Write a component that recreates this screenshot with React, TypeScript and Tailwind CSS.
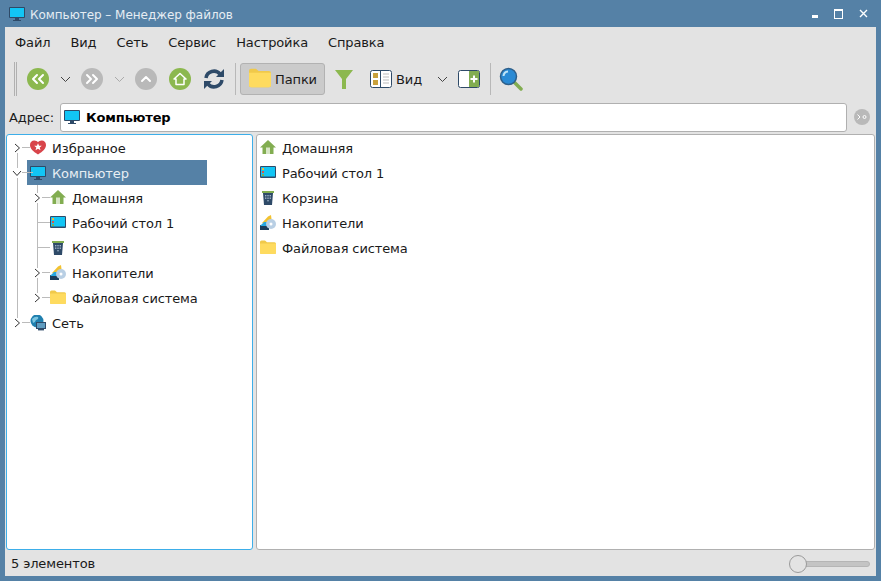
import { ReactNode } from "react";

const font = { fontFamily: '"DejaVu Sans", sans-serif' };

function Computer({ size = 16 }: { size?: number }) {
  return (
    <svg width={size} height={size} viewBox="0 0 16 16">
      <rect x="0" y="1" width="16" height="11" rx="1" fill="#2e4a68" />
      <rect x="1" y="2" width="14" height="9" fill="#12c5f5" />
      <rect x="6" y="12" width="4" height="2" fill="#2e4a68" />
      <rect x="4" y="14" width="8" height="1" fill="#2e4a68" />
    </svg>
  );
}

function Home() {
  return (
    <svg width="16" height="16" viewBox="0 0 16 16">
      <path d="M8 0 L16 7.5 L13.5 7.5 L13.5 14 L2.5 14 L2.5 7.5 L0 7.5 Z" fill="#82ad51" />
      <rect x="6" y="7.5" width="4" height="6.5" fill="#d8e6c6" />
    </svg>
  );
}

function Desktop() {
  return (
    <svg width="16" height="16" viewBox="0 0 16 16">
      <rect x="0" y="1" width="16" height="12" rx="1" fill="#2e4a68" />
      <rect x="1" y="2" width="14" height="9.5" fill="#12c5f5" />
      <rect x="2" y="3" width="2" height="2" fill="#e8b93c" />
      <rect x="2" y="6" width="2" height="2" fill="#d9534f" />
      <rect x="2" y="9" width="2" height="2" fill="#82ad51" />
    </svg>
  );
}

function Trash() {
  return (
    <svg width="16" height="16" viewBox="0 0 16 16">
      <rect x="2" y="1" width="12" height="2" fill="#82ad51" />
      <path d="M3 3 H13 L12 15 H4 Z" fill="#2e4a68" />
      <g fill="#9fb2c6">
        <rect x="5" y="5" width="1.4" height="1.4" />
        <rect x="7.3" y="5" width="1.4" height="1.4" />
        <rect x="9.6" y="5" width="1.4" height="1.4" />
        <rect x="5" y="7.5" width="1.4" height="1.4" />
        <rect x="7.3" y="7.5" width="1.4" height="1.4" />
        <rect x="9.6" y="7.5" width="1.4" height="1.4" />
        <rect x="7.3" y="10" width="1.4" height="1.4" />
      </g>
    </svg>
  );
}

function Drives() {
  return (
    <svg width="16" height="16" viewBox="0 0 16 16">
      <path d="M2 8 L8 1.5 L11 0 L12 8 Z" fill="#f2c230" />
      <path d="M0 10 H9 V15 H0 Z" fill="#1d3c5a" />
      <path d="M0 11 L4 7 H8 V11 Z" fill="#2aa7e0" />
      <circle cx="11" cy="9" r="5" fill="#b9cfe4" />
      <circle cx="11" cy="9" r="1.5" fill="#ffffff" />
    </svg>
  );
}

function Folder({ size = 16 }: { size?: number }) {
  return (
    <svg width={size} height={size} viewBox="0 0 16 16">
      <path d="M0 2 Q0 0.5 1.5 0.5 H5 L7 2.2 H14.5 Q16 2.2 16 3.7 V12.5 Q16 14 14.5 14 H1.5 Q0 14 0 12.5 Z" fill="#f0c94a" />
      <path d="M0 3.5 H16 V12.5 Q16 14 14.5 14 H1.5 Q0 14 0 12.5 Z" fill="#fedb5f" />
    </svg>
  );
}

function Heart() {
  return (
    <svg width="16" height="16" viewBox="0 0 16 16">
      <path d="M8 14.5 C3 11.5 0 8.5 0 5 C0 2 2 0.5 4.2 0.5 C6 0.5 7.2 1.3 8 2.3 C8.8 1.3 10 0.5 11.8 0.5 C14 0.5 16 2 16 5 C16 8.5 13 11.5 8 14.5 Z" fill="#d8444a" />
      <path d="M8 3.3 L9.1 5.8 L11.8 5.8 L9.7 7.6 L10.5 10.3 L8 8.7 L5.5 10.3 L6.3 7.6 L4.2 5.8 L6.9 5.8 Z" fill="#ffffff" />
    </svg>
  );
}

function Network() {
  return (
    <svg width="16" height="16" viewBox="0 0 16 16">
      <circle cx="7" cy="6" r="6.5" fill="#1f7fae" />
      <path d="M2 4 Q5 1 8 2 Q9 4 6 5 Q5 8 3 8 Z" fill="#7cc5e0" />
      <rect x="6" y="7" width="10" height="7" fill="#2e4a68" />
      <rect x="7" y="8" width="8" height="5" fill="#5f9cc0" />
      <rect x="8" y="14" width="6" height="1.4" fill="#2e4a68" />
    </svg>
  );
}

function Chevron({ color = "#444" }: { color?: string }) {
  return (
    <svg width="11" height="7" viewBox="0 0 11 7" fill="none" stroke={color} strokeWidth="1">
      <path d="M1 1 L5.5 5.5 L10 1" />
    </svg>
  );
}

function RoundBtn({ bg, children }: { bg: string; children: ReactNode }) {
  return (
    <div className={`w-[22px] h-[22px] rounded-full flex items-center justify-center ${bg}`}>
      {children}
    </div>
  );
}

function DoubleArrow({ dir }: { dir: "l" | "r" }) {
  return (
    <svg width="14" height="12" viewBox="0 0 14 12" fill="none" stroke="#fff" strokeWidth="2" strokeLinecap="round" strokeLinejoin="round">
      {dir === "l" ? <path d="M6 2 L2 6 L6 10 M12 2 L8 6 L12 10" /> : <path d="M2 2 L6 6 L2 10 M8 2 L12 6 L8 10" />}
    </svg>
  );
}

function Separator() {
  return <div className="w-px h-[32px] bg-[#b8b8b8]" />;
}

function Expander({ open }: { open?: boolean }) {
  return (
    <svg width="10" height="10" viewBox="0 0 10 10" fill="none" stroke="#333" strokeWidth="1" className="bg-white">
      {open ? <path d="M1 3 L5 7.5 L9 3" /> : <path d="M3 1 L7.5 5 L3 9" />}
    </svg>
  );
}

// text sits one pixel under the centre of the row, as in the Qt original
function Label({ children }: { children: ReactNode }) {
  return <span className="pt-[2px]">{children}</span>;
}

const children = [
  { icon: <Home />, label: "Домашняя", exp: true },
  { icon: <Desktop />, label: "Рабочий стол 1", exp: false },
  { icon: <Trash />, label: "Корзина", exp: false },
  { icon: <Drives />, label: "Накопители", exp: true },
  { icon: <Folder />, label: "Файловая система", exp: true },
];

export default function App() {
  return (
    <div style={font} className="w-[881px] h-[581px] bg-[#5581a6] flex flex-col px-[5px] pb-[5px] text-[13px] tracking-[-0.12px] text-[#1a1a1a] overflow-hidden">
      {/* title bar */}
      <div className="h-[27px] flex items-center shrink-0">
        <div className="ml-[4px] mr-[5px]"><Computer /></div>
        <span className="text-[12px] tracking-[-0.04px] text-[#e6edf3] pt-[2px]">Компьютер – Менеджер файлов</span>
        <div className="ml-auto flex items-center gap-[16px] pr-[8px]">
          <div className="w-[6px] h-[3px] bg-white mt-[6px]" />
          <div className="w-[9px] h-[10px] border border-white border-t-2" />
          <svg width="9" height="9" viewBox="0 0 9 9" stroke="#fff" strokeWidth="1.4"><path d="M1 1 L8 8 M8 1 L1 8" /></svg>
        </div>
      </div>

      <div className="flex-1 bg-[#e3e3e3] flex flex-col min-h-0">
        {/* menu */}
        <div className="h-[30px] flex items-center gap-[20px] pl-[10px] shrink-0">
          {["Файл", "Вид", "Сеть", "Сервис", "Настройка", "Справка"].map((m) => (
            <Label key={m}>{m}</Label>
          ))}
        </div>

        {/* toolbar */}
        <div className="h-[44px] flex items-center pl-[9px] shrink-0">
          <div className="w-[3px] h-[34px] border-x border-[#b0b0b0] mr-[10px]" />
          <RoundBtn bg="bg-[#8cb84f]"><DoubleArrow dir="l" /></RoundBtn>
          <div className="ml-[11px] mr-[10px]"><Chevron /></div>
          <RoundBtn bg="bg-[#b9b9b9]"><DoubleArrow dir="r" /></RoundBtn>
          <div className="ml-[11px] mr-[10px]"><Chevron color="#aaa" /></div>
          <RoundBtn bg="bg-[#b9b9b9]">
            <svg width="12" height="8" viewBox="0 0 12 8" fill="none" stroke="#fff" strokeWidth="2" strokeLinecap="round" strokeLinejoin="round"><path d="M2 6 L6 2 L10 6" /></svg>
          </RoundBtn>
          <div className="ml-[12px]">
            <RoundBtn bg="bg-[#8cb84f]">
              <svg width="14" height="14" viewBox="0 0 14 14" fill="none" stroke="#fff" strokeWidth="1.5" strokeLinejoin="round"><path d="M7 1.5 L13 7 H11 V12.5 H3 V7 H1 Z" /></svg>
            </RoundBtn>
          </div>
          <div className="ml-[12px] mr-[10px]">
            <svg width="22" height="22" viewBox="0 0 22 22" fill="none" stroke="#2e4a68" strokeWidth="3.5">
              <path d="M3 10 A8 8 0 0 1 17 6" />
              <path d="M19 12 A8 8 0 0 1 5 16" />
              <path d="M21 1 V9 H13 Z" fill="#2e4a68" stroke="none" />
              <path d="M1 21 V13 H9 Z" fill="#2e4a68" stroke="none" />
            </svg>
          </div>
          <Separator />
          <div className="ml-[4px] w-[85px] h-[32px] rounded-[3px] bg-[#cbcbcb] border border-[#b2b2b2] flex items-center pl-[8px] gap-[4px]">
            <Folder size={22} />
            <Label>Папки</Label>
          </div>
          <div className="ml-[9px] mr-[16px]">
            <svg width="20" height="20" viewBox="0 0 20 20"><path d="M1 1 H19 L12 10 V20 H8 V10 Z" fill="#8cb84f" /></svg>
          </div>
          <svg width="22" height="18" viewBox="0 0 22 18">
            <rect x="0.5" y="0.5" width="21" height="17" rx="2" fill="#fff" stroke="#2e4a68" />
            <rect x="3" y="3" width="5" height="5" fill="#c9a13c" />
            <rect x="3" y="10" width="5" height="5" fill="#c9a13c" />
            <path d="M10.5 1 V17" stroke="#2e4a68" />
            <path d="M13 4 H19 M13 7 H19 M13 10 H19 M13 13 H19" stroke="#bbb" />
          </svg>
          <span className="ml-[4px] pt-[2px]">Вид</span>
          <div className="ml-[15px] mr-[10px]"><Chevron /></div>
          <svg width="22" height="18" viewBox="0 0 22 18">
            <rect x="0.5" y="0.5" width="21" height="17" rx="2" fill="#fff" stroke="#2e4a68" />
            <rect x="11" y="1" width="10" height="16" fill="#82ad51" />
            <path d="M16 5.5 V12.5 M12.5 9 H19.5" stroke="#fff" strokeWidth="2" />
          </svg>
          <div className="ml-[10px] mr-[8px]"><Separator /></div>
          <svg width="24" height="24" viewBox="0 0 24 24">
            <path d="M14 14 L22 22" stroke="#82ad51" strokeWidth="3.5" strokeLinecap="round" />
            <circle cx="9.5" cy="9.5" r="8" fill="#2a8ad4" stroke="#2e5f8a" strokeWidth="1.5" />
            <path d="M4.5 9 A5 5 0 0 1 9 4.5" fill="none" stroke="#bfe4f7" strokeWidth="2" />
          </svg>
        </div>

        {/* address */}
        <div className="h-[32px] flex items-center shrink-0 pl-[4px] pr-[6px]">
          <Label>Адрес:</Label>
          <div className="ml-[6px] flex-1 h-[29px] bg-white border border-[#b0b0b0] rounded-[3px] flex items-center pl-[3px] gap-[6px] font-bold text-black">
            <Computer />
            <Label>Компьютер</Label>
          </div>
          <div className="ml-[7px] w-[16px] h-[16px] rounded-full bg-[#b9b9b9] flex items-center justify-center">
            <svg width="10" height="6" viewBox="0 0 10 6" fill="none" stroke="#fff"><path d="M0.5 0.5 L3 3 L0.5 5.5" /><circle cx="7.5" cy="3" r="1.5" /></svg>
          </div>
        </div>

        {/* panels */}
        <div className="flex-1 flex gap-[3px] px-px min-h-0 mt-px">
          <div className="w-[247px] bg-white border border-[#3daee9] rounded-[3px] relative">
            <div className="absolute left-[10px] top-[13px] w-px h-[175px] bg-[#bbb]" />
            <div className="absolute left-[30px] top-[38px] w-px h-[125px] bg-[#bbb]" />
            <div className="h-[25px] flex items-center relative">
              <div className="absolute left-[10px] w-[16px] h-px bg-[#bbb]" />
              <div className="absolute left-[5px] flex"><Expander /></div>
              <div className="ml-[23px] flex items-center gap-[5px] relative"><div className="bg-white"><Heart /></div><span className="ml-[1px] pt-[2px] tracking-normal">Избранное</span></div>
            </div>
            <div className="h-[25px] flex items-center relative">
              <div className="absolute left-[10px] w-[16px] h-px bg-[#bbb]" />
              <div className="absolute left-[5px] flex"><Expander open /></div>
              <div className="ml-[20px] w-[180px] h-[25px] bg-[#5581a6] text-[#e8eef3] flex items-center pl-[3px] gap-[6px]"><Computer /><Label>Компьютер</Label></div>
            </div>
            {children.map((c) => (
              <div key={c.label} className="h-[25px] flex items-center relative">
                <div className="absolute left-[30px] w-[16px] h-px bg-[#bbb]" />
                {c.exp && <div className="absolute left-[25px] flex"><Expander /></div>}
                <div className="ml-[43px] flex items-center gap-[6px] relative"><div className="bg-white">{c.icon}</div><Label>{c.label}</Label></div>
              </div>
            ))}
            <div className="h-[25px] flex items-center relative">
              <div className="absolute left-[10px] w-[16px] h-px bg-[#bbb]" />
              <div className="absolute left-[5px] flex"><Expander /></div>
              <div className="ml-[23px] flex items-center gap-[6px] relative"><div className="bg-white"><Network /></div><Label>Сеть</Label></div>
            </div>
          </div>
          <div className="flex-1 bg-white border border-[#b0b0b0] rounded-[3px]">
            {children.map((c) => (
              <div key={c.label} className="h-[25px] flex items-center pl-[3px] gap-[6px]">
                {c.icon}
                <Label>{c.label}</Label>
              </div>
            ))}
          </div>
        </div>

        {/* status */}
        <div className="h-[26px] flex items-center pl-[6px] pr-[6px] shrink-0">
          <Label>5 элементов</Label>
          <div className="ml-auto relative w-[81px] h-[18px] flex items-center mt-[2px]">
            <div className="absolute left-[12px] right-0 h-[6px] rounded-full bg-[#c4c4c4] border border-[#b5b5b5]" />
            <div className="absolute left-0 w-[18px] h-[18px] rounded-full bg-[#e3e3e3] border border-[#9a9a9a]" />
          </div>
        </div>
      </div>
    </div>
  );
}
